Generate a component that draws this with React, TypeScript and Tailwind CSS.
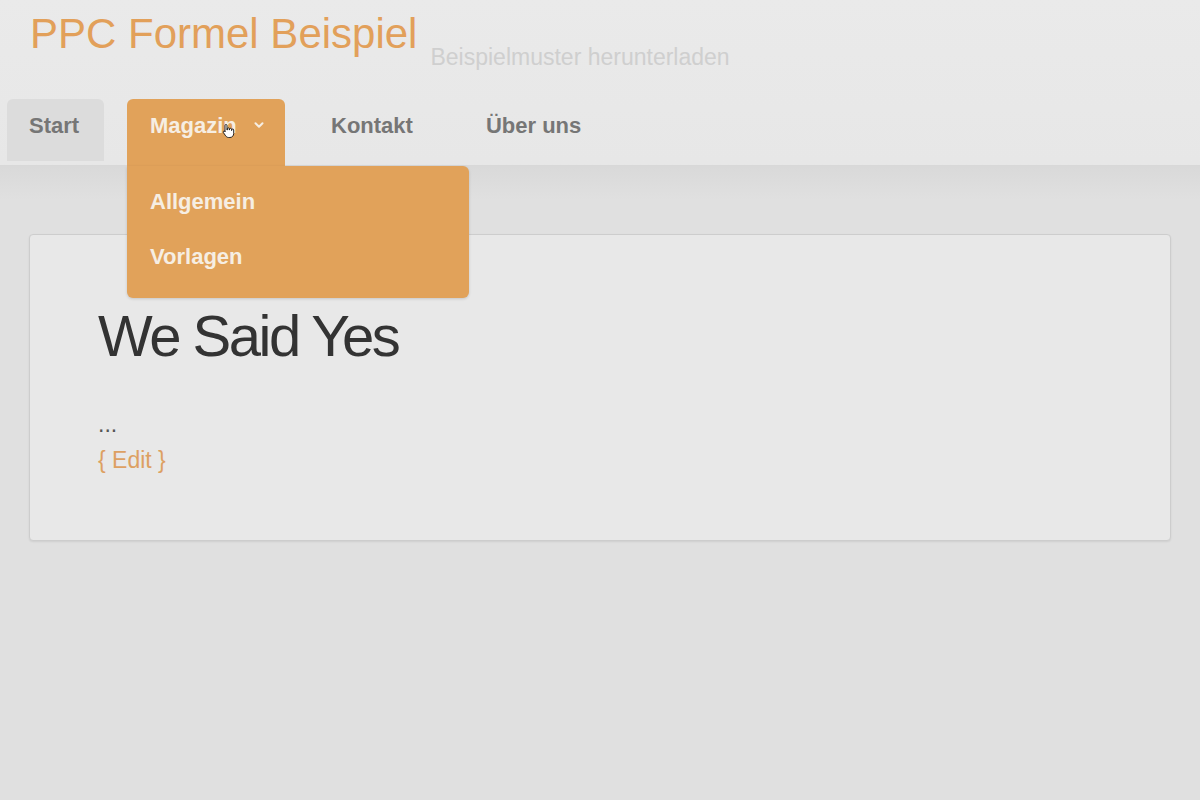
import { ChevronDown } from "lucide-react";

function HandCursor() {
  return (
    <svg width="14" height="16" viewBox="0 0 14 16" className="absolute left-[95px] top-[24px]">
      <path
        d="M4 1.5c.6 0 1 .4 1 1V7h.3V5.8c0-.6.4-1 1-1s1 .4 1 1V7h.2V6.3c0-.6.4-1 1-1s1 .4 1 1V7.5h.2V7c0-.6.4-1 1-1s1 .4 1 1v3.5c0 2.3-1.6 4-3.8 4H6.6c-1.3 0-2.2-.6-2.9-1.6L1.4 9.6c-.3-.5-.2-1.1.3-1.4.5-.3 1-.2 1.3.2L3 9V2.5c0-.6.4-1 1-1z"
        fill="#fff"
        stroke="#111"
        strokeWidth="0.9"
        strokeLinejoin="round"
      />
    </svg>
  );
}

export default function App() {
  return (
    <div className="min-h-screen bg-[#e0e0e0] font-['Liberation_Sans',Arial,sans-serif]">
      <header className="relative h-[166px] border-b border-[#d8d8d8] bg-gradient-to-b from-[#eaeaea] to-[#e7e7e7]">
        <div className="flex items-baseline pl-[30px] pt-[10px]">
          <h1 className="text-[42px] leading-[48px] text-[#e2a05a]">PPC Formel Beispiel</h1>
          <span className="relative top-[17px] ml-[13px] text-[23px] text-[#cfcfcf]">
            Beispielmuster herunterladen
          </span>
        </div>

        <nav className="mt-[41px] flex gap-[23px] pl-[7px] text-[22px] font-bold">
          <div className="h-[62px] w-[97px] rounded-t-[6px] bg-[#dcdcdc] pl-[22px] pt-[10px] text-[#767676]">
            Start
          </div>
          <div className="relative z-10 flex h-[67px] w-[158px] items-start rounded-t-[6px] bg-[#e1a25a] pl-[23px] pt-[10px] text-[#f6eee3]">
            <span>Magazin</span>
            <ChevronDown className="ml-[15px] mt-[9px]" size={14} strokeWidth={3.5} />
            <HandCursor />
            <div className="absolute left-0 top-full flex h-[132px] w-[342px] flex-col gap-[21px] rounded-b-[6px] rounded-tr-[6px] bg-[#e1a25a] px-[23px] pt-[19px] shadow-[0_1px_3px_rgba(0,0,0,0.15)]">
              <span className="leading-[34px]">Allgemein</span>
              <span className="leading-[34px]">Vorlagen</span>
            </div>
          </div>
          <div className="pl-[23px] pr-[27px] pt-[10px] text-[#767676]">Kontakt</div>
          <div className="px-[23px] pt-[10px] text-[#767676]">Über uns</div>
        </nav>
      </header>

      <div className="h-[34px] bg-gradient-to-b from-[#d9d9d9] to-[#e0e0e0]" />

      <main className="mt-[34px] px-[29px]">
        <section className="h-[307px] rounded-[4px] border border-[#cdcdcd] bg-[#e8e8e8] px-[68px] pt-[66px] shadow-[0_1px_2px_rgba(0,0,0,0.08)]">
          <h2 className="text-[58px] leading-[70px] tracking-[-2.5px] text-[#333]">We Said Yes</h2>
          <p className="mt-[38px] text-[23px] leading-[30px] text-[#555]">...</p>
          <a className="mt-[6px] block text-[23px] leading-[30px] text-[#dda062]">{"{ Edit }"}</a>
        </section>
      </main>
    </div>
  );
}
